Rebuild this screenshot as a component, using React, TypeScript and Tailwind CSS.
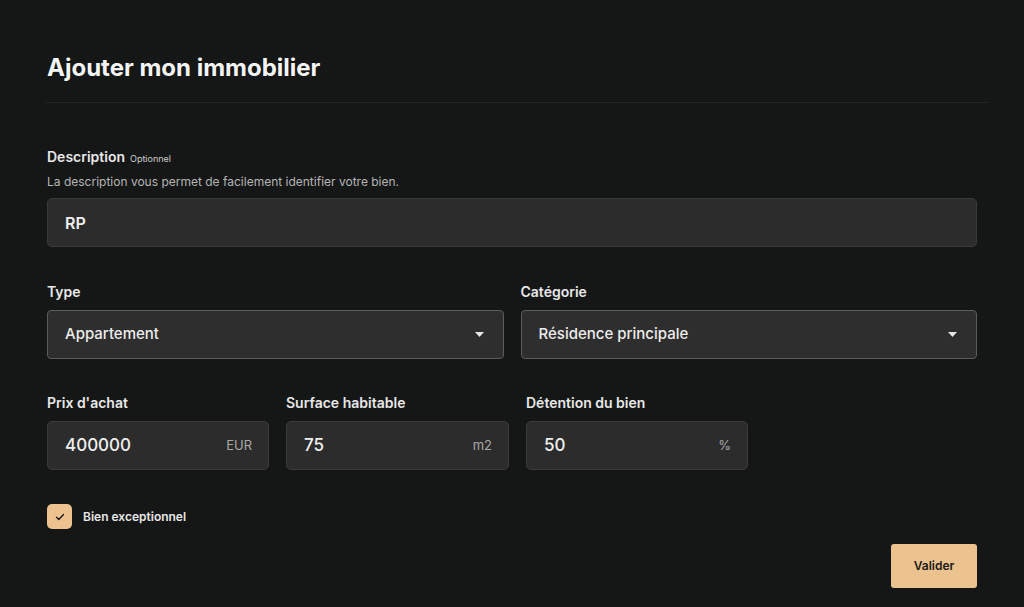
import React from "react";

const Caret = () => (
  <svg width="9" height="5" viewBox="0 0 9 5"><path d="M0 0h9L4.5 5z" fill="#e5e5e5" /></svg>
);

function Select({ value }: { value: string }) {
  return (
    <div className="h-[49px] rounded-[4px] border border-[#5c5c5c] bg-[#2e2e2e] flex items-center justify-between pl-[17px] pr-[19px] text-[15px] font-medium text-[#ededed]">
      <span>{value}</span>
      <Caret />
    </div>
  );
}

function Num({ label, value, unit }: { label: string; value: string; unit: string }) {
  return (
    <div className="flex flex-col">
      <div className="text-[14px] font-semibold text-[#e8e8e8] h-[18px] leading-[18px] mb-[9px]">{label}</div>
      <div className="h-[49px] rounded-[5px] border border-[#3b3b3b] bg-[#2c2c2c] flex items-center justify-between pl-[17px] pr-[16px]">
        <span className="text-[17px] font-medium text-[#f0f0f0]">{value}</span>
        <span className="text-[13px] text-[#a8a8a8]">{unit}</span>
      </div>
    </div>
  );
}

export default function App() {
  return (
    <div className="h-[607px] overflow-hidden w-full bg-[#151616] px-[47px] pt-[52px] text-white" style={{ fontFamily: "Inter, 'Noto Sans', sans-serif" }}>
      <h1 className="text-[24px] font-bold leading-[32px] text-[#f5f5f5]">Ajouter mon immobilier</h1>
      <div className="mt-[18px] mr-[-11px] ml-[-2px] h-px bg-[#232424]" />
      <div className="mt-[43px] flex items-baseline gap-[5px]">
        <span className="text-[14px] font-semibold text-[#e8e8e8]">Description</span>
        <span className="text-[9px] text-[#cfcfcf]">Optionnel</span>
      </div>
      <div className="mt-[6px] text-[12px] text-[#b5b5b5]">La description vous permet de facilement identifier votre bien.</div>
      <div className="mt-[7px] h-[49px] rounded-[5px] border border-[#3b3b3b] bg-[#2c2c2c] flex items-center pl-[17px] text-[16px] font-semibold text-[#f0f0f0]">RP</div>

      <div className="mt-[36px] grid grid-cols-2 gap-[17px]">
        <div>
          <div className="text-[14px] font-semibold text-[#e8e8e8] h-[18px] leading-[18px] mb-[9px]">Type</div>
          <Select value="Appartement" />
        </div>
        <div>
          <div className="text-[14px] font-semibold text-[#e8e8e8] h-[18px] leading-[18px] mb-[9px]">Catégorie</div>
          <Select value="Résidence principale" />
        </div>
      </div>

      <div className="mt-[35px] grid grid-cols-[222px_223px_222px] gap-[17px]">
        <Num label="Prix d'achat" value="400000" unit="EUR" />
        <Num label="Surface habitable" value="75" unit="m2" />
        <Num label="Détention du bien" value="50" unit="%" />
      </div>

      <div className="mt-[34px] flex items-center gap-[11px]">
        <div className="w-[25px] h-[25px] rounded-[5px] bg-[#ecc38f] flex items-center justify-center">
          <svg width="10" height="8" viewBox="0 0 10 8"><path d="M1.5 4.2l2.3 2.2L8.5 1.5" stroke="#1a1a1a" strokeWidth="1.4" fill="none" strokeLinecap="round" strokeLinejoin="round" /></svg>
        </div>
        <span className="text-[12px] font-semibold text-[#e8e8e8]">Bien exceptionnel</span>
      </div>

      <div className="mt-[15px] flex justify-end">
        <button className="w-[86px] h-[44px] rounded-[3px] bg-[#ecc38f] text-[12px] font-semibold text-[#1a1a1a]">Valider</button>
      </div>
    </div>
  );
}
